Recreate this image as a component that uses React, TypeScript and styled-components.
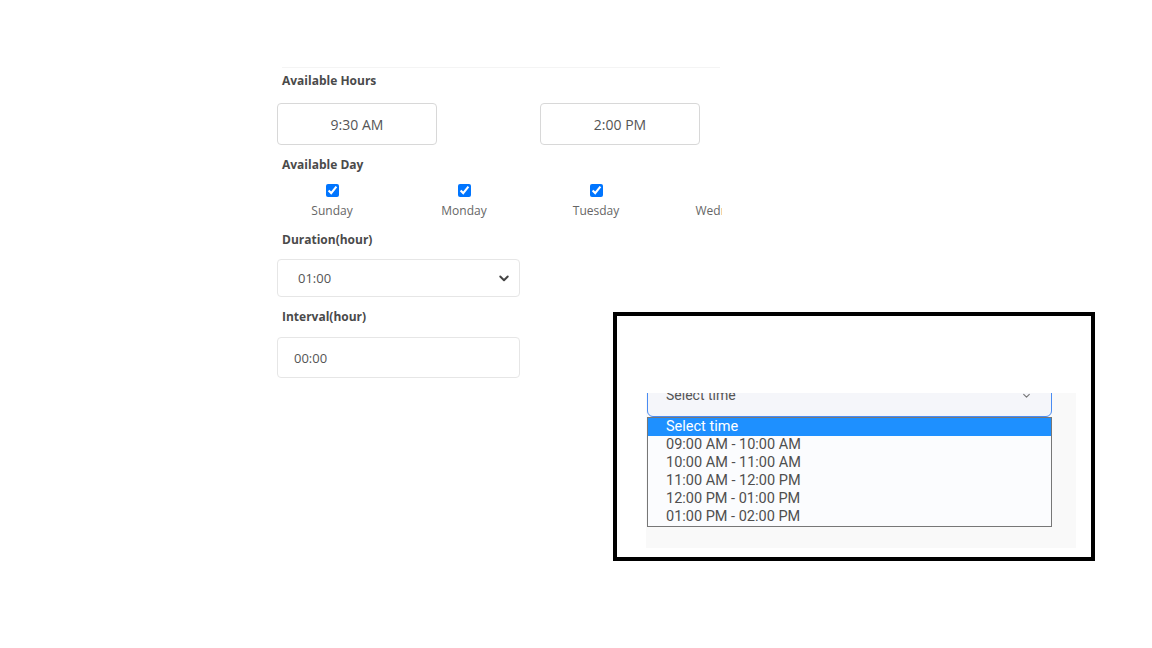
import * as React from "react";
import styled, { createGlobalStyle } from "styled-components";

const GlobalStyle = createGlobalStyle`
  html, body {
    margin: 0;
    padding: 0;
    background: #ffffff;
  }
  body {
    font-family: "Open Sans", "Liberation Sans", sans-serif;
  }
`;

const Page = styled.div`
  display: grid;
  grid-template-columns: 343px 482px;
  align-items: start;
  padding: 67px 0 0 270px;
  width: 1152px;
  height: 648px;
  box-sizing: border-box;
  overflow: hidden;
`;

const Form = styled.div`
  width: 452px;
  display: flex;
  flex-direction: column;
  overflow: hidden;
`;

const TopRule = styled.div`
  margin-left: 12px;
  margin-right: 2px;
  height: 1px;
  background: #f4f4f4;
`;

const Label = styled.div<{ gap: number }>`
  margin-top: ${(p) => p.gap}px;
  padding-left: 12px;
  font-size: 12px;
  line-height: 16px;
  font-weight: 700;
  color: #4a4a4a;
`;

const HoursRow = styled.div`
  display: flex;
  gap: 103px;
  margin-top: 14px;
  padding-left: 7px;
`;

const TimeBox = styled.div`
  width: 160px;
  height: 42px;
  box-sizing: border-box;
  border: 1px solid #d8d8d8;
  border-radius: 4px;
  display: flex;
  align-items: center;
  justify-content: center;
  font-size: 14px;
  color: #555555;
`;

const DaysRow = styled.div`
  display: grid;
  grid-template-columns: repeat(4, 110px);
  column-gap: 22px;
  margin-top: 11px;
  padding-left: 7px;
`;

const Day = styled.label`
  display: flex;
  flex-direction: column;
  align-items: center;
  gap: 6px;
  font-size: 12px;
  line-height: 16px;
  color: #666666;
  white-space: nowrap;
`;

const Check = styled.input`
  width: 13px;
  height: 13px;
  margin: 0;
`;

const Field = styled.div<{ h: number; pad: number; gap: number }>`
  margin-top: ${(p) => p.gap}px;
  margin-left: 7px;
  width: 243px;
  height: ${(p) => p.h}px;
  box-sizing: border-box;
  border: 1px solid #e6e6e6;
  border-radius: 4px;
  display: flex;
  align-items: center;
  justify-content: space-between;
  padding: 0 9px 0 ${(p) => p.pad}px;
  font-size: 13px;
  color: #555555;
`;

const Frame = styled.div`
  margin-top: 245px;
  width: 482px;
  height: 249px;
  box-sizing: border-box;
  border: 4px solid #000000;
  background: #ffffff;
  display: flex;
  flex-direction: column;
`;

const FrameTop = styled.div`
  height: 77px;
  flex: none;
`;

const Panel = styled.div`
  margin-left: 29px;
  width: 430px;
  height: 155px;
  flex: none;
  background: #f9f9f9;
  overflow: hidden;
  display: flex;
  flex-direction: column;
  font-family: Roboto, "Liberation Sans", sans-serif;
`;

const SelectBox = styled.div`
  margin: -24px 0 0 1px;
  width: 405px;
  height: 48px;
  flex: none;
  box-sizing: border-box;
  border: 1px solid #4a8cf2;
  border-radius: 6px;
  background: #f5f6fa;
  display: flex;
  align-items: center;
  justify-content: space-between;
  padding: 4px 20px 0 18px;
  font-size: 14px;
  color: #555555;
`;

const List = styled.div`
  margin-left: 1px;
  width: 405px;
  box-sizing: border-box;
  border: 1px solid #777777;
  background: #fbfcfe;
`;

const Option = styled.div<{ active?: boolean }>`
  height: 18px;
  line-height: 18px;
  padding-left: 18px;
  font-size: 14.5px;
  color: ${(p) => (p.active ? "#ffffff" : "#4f4f4f")};
  background: ${(p) => (p.active ? "#1e90ff" : "transparent")};
`;

const Chevron = ({ size, color, stroke }: { size: number; color: string; stroke: number }) => (
  <svg width={size} height={size} viewBox="0 0 16 16" fill="none">
    <path
      d="M3 6l5 5 5-5"
      stroke={color}
      strokeWidth={stroke}
      strokeLinecap="round"
      strokeLinejoin="round"
    />
  </svg>
);

const days = ["Sunday", "Monday", "Tuesday", "Wednesday"];

const slots = [
  "09:00 AM - 10:00 AM",
  "10:00 AM - 11:00 AM",
  "11:00 AM - 12:00 PM",
  "12:00 PM - 01:00 PM",
  "01:00 PM - 02:00 PM",
];

export default function App() {
  return (
    <>
      <GlobalStyle />
      <Page>
        <Form>
          <TopRule />
          <Label gap={5}>Available Hours</Label>
          <HoursRow>
            <TimeBox>9:30 AM</TimeBox>
            <TimeBox>2:00 PM</TimeBox>
          </HoursRow>
          <Label gap={12}>Available Day</Label>
          <DaysRow>
            {days.map((d) => (
              <Day key={d}>
                <Check type="checkbox" defaultChecked />
                {d}
              </Day>
            ))}
          </DaysRow>
          <Label gap={13}>Duration(hour)</Label>
          <Field h={38} pad={20} gap={11}>
            01:00
            <Chevron size={12} color="#444444" stroke={2.6} />
          </Field>
          <Label gap={12}>Interval(hour)</Label>
          <Field h={41} pad={16} gap={12}>
            00:00
          </Field>
        </Form>
        <Frame>
          <FrameTop />
          <Panel>
            <SelectBox>
              Select time
              <Chevron size={9} color="#777777" stroke={2} />
            </SelectBox>
            <List>
              <Option active>Select time</Option>
              {slots.map((s) => (
                <Option key={s}>{s}</Option>
              ))}
            </List>
          </Panel>
        </Frame>
      </Page>
    </>
  );
}
